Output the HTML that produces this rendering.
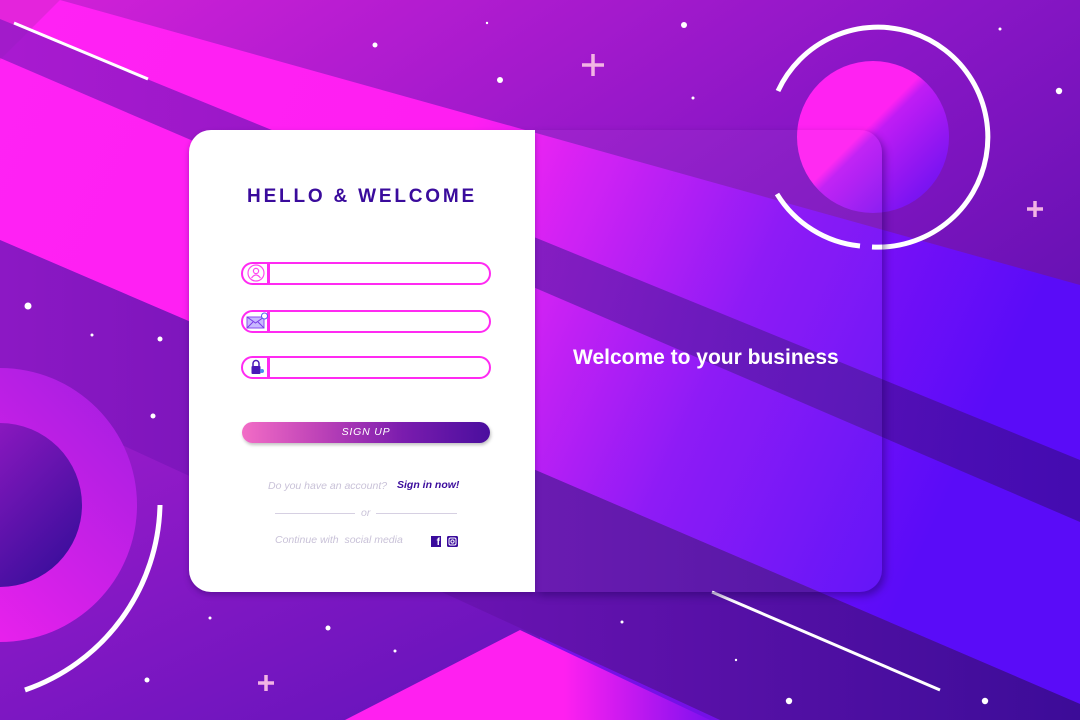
<!DOCTYPE html>
<html><head><meta charset="utf-8"><style>
*{margin:0;padding:0;box-sizing:border-box}
html,body{width:1080px;height:720px;overflow:hidden;font-family:"Liberation Sans",sans-serif}
#bg{position:absolute;left:0;top:0}
.card{position:absolute;left:189px;top:130px;width:346px;height:462px;background:#fff;border-radius:22px 0 0 22px;box-shadow:0 3px 6px rgba(40,0,90,.35)}
.glass{position:absolute;left:535px;top:130px;width:347px;height:462px;border-radius:0 22px 22px 0;background:rgba(255,255,255,.04);box-shadow:3px 4px 8px rgba(30,0,90,.45)}
.t{position:absolute;white-space:nowrap}
.h{left:189px;width:346px;text-align:center;top:186px;font-size:19px;font-weight:bold;letter-spacing:2.8px;color:#3a0b9c}
.inp{position:absolute;left:241px;width:250px;height:23px;border:2.5px solid #ff2af2;border-radius:12px}
.inp .div{position:absolute;left:24px;top:-2px;width:2.5px;height:23px;background:#ff2af2}
.inp svg{position:absolute;left:2px;top:0}
.btn{position:absolute;left:242px;top:422px;width:248px;height:21px;border-radius:11px;background:linear-gradient(90deg,#f26cc6 0%,#c044b8 30%,#7a1cae 65%,#4a0e9e 100%);box-shadow:1px 2px 3px rgba(0,0,0,.25);color:#fff;font-style:italic;font-size:10.5px;letter-spacing:.8px;text-align:center;line-height:21px}
.g{color:#c9c2d8;font-style:italic;font-size:10.5px}
.ln{position:absolute;height:1px;background:#d6d0e2;top:513px}
</style></head><body>
<svg id="bg" width="1080" height="720" viewBox="0 0 1080 720">
<defs>
<linearGradient id="base" x1="0" y1="0" x2="1" y2="1"><stop offset="0" stop-color="#d421d8"/><stop offset=".45" stop-color="#8a16c6"/><stop offset="1" stop-color="#3e0c9e"/></linearGradient>
<linearGradient id="band" x1="0" y1="0" x2="1" y2=".3"><stop offset="0" stop-color="#ff22f4"/><stop offset=".45" stop-color="#ff1ef2"/><stop offset=".75" stop-color="#8a12f6"/><stop offset="1" stop-color="#5a0cf8"/></linearGradient>
<linearGradient id="dark" x1="0" y1="0" x2="1" y2="0"><stop offset="0" stop-color="#8c18c4"/><stop offset="1" stop-color="#3c0c98"/></linearGradient>
<linearGradient id="low" x1="0" y1="0" x2="1" y2="1"><stop offset="0" stop-color="#a01ccc"/><stop offset="1" stop-color="#5a12b8"/></linearGradient>
<linearGradient id="tri" x1="0" y1="0" x2="1" y2="0"><stop offset="0" stop-color="#ff20f0"/><stop offset=".6" stop-color="#ff20f0"/><stop offset="1" stop-color="#8010f0"/></linearGradient>
<linearGradient id="ring" x1="0" y1="1" x2="1" y2="0"><stop offset="0" stop-color="#ff22f0"/><stop offset="1" stop-color="#a01ee0"/></linearGradient>
<linearGradient id="inner" x1="1" y1="1" x2="0" y2="0"><stop offset="0" stop-color="#2e0c96"/><stop offset="1" stop-color="#a81ccc"/></linearGradient>
<linearGradient id="sun" x1="0" y1="0" x2="1" y2="1"><stop offset="0" stop-color="#ff22f2"/><stop offset=".45" stop-color="#ff22f2"/><stop offset=".5" stop-color="#c01cf4"/><stop offset="1" stop-color="#5a10f0"/></linearGradient>
</defs>
<rect width="1080" height="720" fill="url(#base)"/>
<polygon points="60,0 1080,285 1080,704 0,240 0,0" fill="url(#band)"/>
<polygon points="0,0 60,0 0,60" fill="#e424dc"/>
<polygon points="0,19 1080,460 1080,522 0,58" fill="url(#dark)" opacity=".75"/>
<polygon points="0,240 1080,704 1080,720 720,720 0,389" fill="url(#dark)"/>
<polygon points="0,389 720,720 0,720" fill="url(#low)"/>
<polygon points="540,637 720,720 540,720" fill="#7a10f2" opacity=".8"/>
<polygon points="520,630 710,720 345,720" fill="url(#tri)"/>
<circle cx="0" cy="505" r="137" fill="url(#ring)"/>
<circle cx="0" cy="505" r="82" fill="url(#inner)"/>
<path d="M160,505 A200,200 0 0 1 25,690" stroke="#fff" stroke-width="5" fill="none"/>
<circle cx="873" cy="137" r="76" fill="url(#sun)"/>
<path d="M778,91 A110,110 0 1 1 872,247" stroke="#fff" stroke-width="5" fill="none"/>
<path d="M860,246 A110,110 0 0 1 777,194" stroke="#fff" stroke-width="5" fill="none"/>
<line x1="14" y1="23" x2="148" y2="79" stroke="#fff" stroke-width="3"/>
<line x1="712" y1="592" x2="940" y2="690" stroke="#fff" stroke-width="3"/>
<g fill="#fff">
<circle cx="375" cy="45" r="2.5"/><circle cx="487" cy="23" r="1.2"/><circle cx="500" cy="80" r="3"/><circle cx="684" cy="25" r="3"/><circle cx="693" cy="98" r="1.5"/><circle cx="1000" cy="29" r="1.5"/><circle cx="1059" cy="91" r="3.2"/><circle cx="28" cy="306" r="3.5"/><circle cx="92" cy="335" r="1.5"/><circle cx="160" cy="339" r="2.5"/><circle cx="153" cy="416" r="2.5"/><circle cx="210" cy="618" r="1.5"/><circle cx="328" cy="628" r="2.5"/><circle cx="395" cy="651" r="1.5"/><circle cx="147" cy="680" r="2.5"/><circle cx="622" cy="622" r="1.5"/><circle cx="736" cy="660" r="1.2"/><circle cx="789" cy="701" r="3.2"/><circle cx="985" cy="701" r="3.2"/>
</g>
<g stroke="#f2b4e4" stroke-width="3.5">
<line x1="582" y1="65" x2="604" y2="65"/><line x1="593" y1="54" x2="593" y2="76"/>
<line x1="1027" y1="209" x2="1043" y2="209"/><line x1="1035" y1="201" x2="1035" y2="217"/>
<line x1="258" y1="683" x2="274" y2="683"/><line x1="266" y1="675" x2="266" y2="691"/>
</g>
</svg>
<div class="glass"></div>
<div class="card"></div>
<div class="t h">HELLO &amp; WELCOME</div>
<div class="inp" style="top:262px"><div class="div"></div><svg width="22" height="18" viewBox="0 0 22 18"><circle cx="11" cy="9" r="8" fill="none" stroke="#ff4af0" stroke-width="1.2"/><circle cx="11" cy="7" r="2.6" fill="none" stroke="#ff4af0" stroke-width="1.2"/><path d="M6.5,14 Q11,8 15.5,14" fill="none" stroke="#ff4af0" stroke-width="1.2"/></svg></div>
<div class="inp" style="top:310px"><div class="div"></div><svg width="24" height="18" viewBox="0 0 24 18"><rect x="2" y="5" width="17" height="11" fill="#c8b8ff" stroke="#8a4cf0" stroke-width="1"/><path d="M2,5 L10.5,11 L19,5 M2,16 L8,10 M19,16 L13,10" fill="none" stroke="#7a3ce8" stroke-width="1"/><circle cx="19.5" cy="4" r="3" fill="#fff" stroke="#5a5cf0" stroke-width="1"/></svg></div>
<div class="inp" style="top:356px"><div class="div"></div><svg width="22" height="18" viewBox="0 0 22 18"><path d="M8,8 V5.5 A3,3 0 0 1 14,5.5 V8" fill="none" stroke="#4a18b8" stroke-width="1.5"/><rect x="6.5" y="8" width="9" height="8" rx="1" fill="#4a18b8"/><circle cx="17" cy="13" r="2" fill="#4a8af0"/></svg></div>
<div class="btn">SIGN UP</div>
<div class="t g" style="left:268px;top:480px">Do you have an account?</div>
<div class="t" style="left:397px;top:479px;font-size:10.5px;font-weight:bold;font-style:italic;color:#3a0b9c">Sign in now!</div>
<div class="ln" style="left:275px;width:80px"></div>
<div class="ln" style="left:376px;width:81px"></div>
<div class="t g" style="left:361px;top:507px">or</div>
<div class="t g" style="left:275px;top:534px">Continue with&nbsp; social media</div>
<div class="t" style="left:431px;top:536px;width:10px;height:11px;background:#3a0b9c;color:#fff;font-size:10px;font-weight:bold;line-height:13px;text-align:right;padding-right:1px">f</div>
<svg class="t" style="left:447px;top:536px" width="11" height="11" viewBox="0 0 11 11"><rect width="11" height="11" rx="1.5" fill="#3a0b9c"/><rect x="2" y="2" width="7" height="7" rx="1.5" fill="none" stroke="#fff" stroke-width="1"/><circle cx="5.5" cy="5.5" r="1.6" fill="none" stroke="#fff" stroke-width="1"/></svg>
<div class="t" style="left:573px;top:346px;font-size:21px;font-weight:bold;color:#fff">Welcome to your business</div>
</body></html>
